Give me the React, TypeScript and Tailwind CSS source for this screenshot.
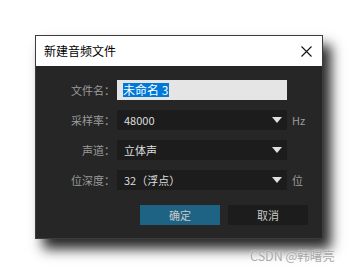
import React from 'react'

const cjk = { fontFamily: '"Noto Sans CJK SC", "Noto Sans", sans-serif' }

const Arrow = () => (
  <svg width="10" height="6" viewBox="0 0 10 6" className="shrink-0">
    <path d="M0 0 L10 0 L5 6 Z" fill="#e0e0e0" />
  </svg>
)

const rows = [
  { label: '采样率：', value: '48000', unit: 'Hz' },
  { label: '声道：', value: '立体声', unit: '' },
  { label: '位深度：', value: '32（浮点）', unit: '位' },
]

export default function App() {
  return (
    <div className="relative w-[358px] h-[275px] bg-white pt-[35px] pl-[35px] overflow-hidden" style={cjk}>
      <div className="w-[288px] border border-[#3c3c3c] shadow-[8px_10px_12px_rgba(0,0,0,0.85)]">
        {/* title bar */}
        <div className="h-[30px] bg-white flex items-center justify-between pl-[8px] pr-[10px]">
          <span className="text-[12px] text-black leading-none">新建音频文件</span>
          <svg width="11" height="11" viewBox="0 0 11 11">
            <path d="M0.5 0.5 L10.5 10.5 M10.5 0.5 L0.5 10.5" stroke="#111" strokeWidth="1.1" />
          </svg>
        </div>

        {/* body */}
        <div className="bg-[#262626] pt-[14px] pb-[13px] flex flex-col gap-[10px]">
          <div className="flex items-center h-[20px]">
            <span className="w-[79px] text-right text-[11px] text-[#9b9b9b]">文件名：</span>
            <div className="ml-[2px] w-[170px] h-[20px] bg-[#e5e5e5] flex items-center pl-[6px]">
              <span className="bg-[#0078d7] text-white text-[12px] leading-[14px] pr-[1px]">未命名 3</span>
            </div>
          </div>

          {rows.map((r) => (
            <div key={r.label} className="flex items-center h-[20px]">
              <span className="w-[79px] text-right text-[11px] text-[#9b9b9b]">{r.label}</span>
              <div className="ml-[2px] w-[170px] h-[20px] bg-[#1c1c1c] flex items-center justify-between pl-[7px] pr-[5px]">
                <span className="text-[11px] text-[#dcdcdc]">{r.value}</span>
                <Arrow />
              </div>
              <span className="ml-[5px] text-[11px] text-[#9b9b9b]">{r.unit}</span>
            </div>
          ))}

          <div className="flex gap-[8px] ml-[104px] mt-[5px]">
            <button className="w-[80px] h-[20px] bg-[#1f6384] text-[11px] text-[#c8c8c8]">确定</button>
            <button className="w-[80px] h-[20px] bg-[#1c1c1c] text-[11px] text-[#c8c8c8]">取消</button>
          </div>
        </div>
      </div>

      <span
        className="absolute left-[250px] top-[250px] text-[12.5px] text-[#a8a8a8] leading-none [text-shadow:0_0_2px_#fff]"
      >
        CSDN @韩曙亮
      </span>
    </div>
  )
}
